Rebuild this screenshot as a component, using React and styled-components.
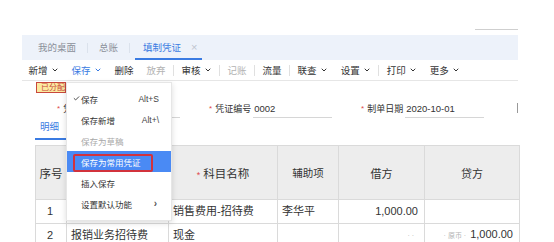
import React from "react";
import styled, { createGlobalStyle } from "styled-components";
import { ChevronDown, Check } from "lucide-react";

const GlobalStyle = createGlobalStyle`
  html, body {
    margin: 0;
    background: #fff;
    font-family: "Liberation Sans", "Noto Sans CJK SC", sans-serif;
    color: #333;
  }
`;

const Page = styled.div`
  width: 554px;
  height: 242px;
  overflow: hidden;
`;

const TopStrip = styled.div`
  height: 35px;
  display: flex;
  justify-content: flex-end;
  align-items: flex-end;
  padding-right: 36px;
`;

const TopLine = styled.div`
  width: 43px;
  height: 1px;
  margin-bottom: 5px;
  background: #cfcfcf;
`;

const Frame = styled.div`
  width: 496px;
  margin-left: 22px;
`;

const TabBar = styled.div`
  height: 25px;
  background: #edf2fa;
  display: flex;
  align-items: stretch;
  gap: 5px;
  padding-left: 10px;
  font-size: 9.5px;
`;

const Tab = styled.div`
  display: flex;
  align-items: center;
  gap: 10px;
  padding: 0 ${(p) => (p.$active ? "5px 0 8px" : "6px")};
  color: ${(p) => (p.$active ? "#3a7be2" : "#8a8f99")};
  border-bottom: 2px solid ${(p) => (p.$active ? "#3a7be2" : "transparent")};
  box-sizing: border-box;
`;

const TabSep = styled.div`
  width: 1px;
  height: 10px;
  align-self: center;
  background: #dbe2ec;
`;

const Close = styled.span`
  color: #bfc5cf;
  font-size: 11px;
`;

const Toolbar = styled.div`
  height: 20px;
  display: flex;
  align-items: center;
  border-bottom: 1px solid #e6e6e6;
  font-size: 9.5px;
`;

const ToolItem = styled.div`
  display: flex;
  align-items: center;
  padding: 0 6.5px;
  color: ${(p) => (p.$tone === "blue" ? "#3a7be2" : p.$tone === "muted" ? "#b3b3b3" : "#333")};
  svg {
    margin-left: 3px;
  }
`;

const ToolSep = styled.div`
  width: 1px;
  height: 11px;
  margin: 0 1px;
  background: #e0e0e0;
`;

const Body = styled.div`
  position: relative;
  padding-left: 13px;
`;

const Stamp = styled.div`
  margin-top: 1px;
  margin-left: 1px;
  width: 30px;
  height: 11px;
  box-sizing: border-box;
  border: 1px solid #c9483d;
  background: #fbeaa0;
  color: #c9483d;
  font-size: 8px;
  line-height: 9px;
  padding-left: 4px;
  overflow: hidden;
  white-space: nowrap;
`;

const FormRow = styled.div`
  display: flex;
  gap: 29px;
  margin-top: 4px;
  padding-left: 22px;
  height: 22px;
  align-items: center;
`;

const Field = styled.div`
  width: 123px;
  display: flex;
  align-items: center;
  font-size: 9px;
`;

const Req = styled.span`
  color: #e0484b;
  margin-right: 3px;
  font-size: ${(p) => p.$size || "8px"};
`;

const Label = styled.span`
  white-space: nowrap;
  margin-right: 2px;
`;

const Value = styled.span`
  flex: 1;
  border-bottom: 1px solid #d6d6d6;
  padding: 0 0 2px 1px;
  font-size: 9.5px;
  line-height: 12px;
  margin-top: 4px;
`;

const EdgeMark = styled.div`
  margin-left: auto;
  width: 1px;
  height: 10px;
  background: #999;
`;

const DetailTabs = styled.div`
  height: 21px;
  display: flex;
  align-items: flex-end;
`;

const DetailTab = styled.div`
  width: 31px;
  box-sizing: border-box;
  padding: 0 0 5px 5px;
  font-size: 9.5px;
  color: #3a7be2;
  border-bottom: 2px solid #3a7be2;
`;

const Table = styled.table`
  margin-top: 5px;
  border-collapse: collapse;
  table-layout: fixed;
  width: 484px;
  font-size: 11px;
`;

const Th = styled.th`
  height: 53px;
  padding: 0;
  background: #ededed;
  border: 1px solid #dadada;
  font-weight: normal;
  color: #333;
  font-size: ${(p) => p.$size || "11px"};
`;

const Td = styled.td`
  height: 24px;
  padding: 0 6px 2px 4px;
  box-sizing: border-box;
  border: 1px solid #dadada;
  text-align: ${(p) => p.$align || "left"};
  white-space: nowrap;
  overflow: hidden;
  color: #333;
  line-height: 14px;
`;

const Faint = styled.span`
  color: #b5b5b5;
  font-size: 7px;
  margin-right: 4px;
`;

const Menu = styled.div`
  position: absolute;
  left: 44px;
  top: 0;
  width: 106px;
  padding: 5px 0 6px;
  background: #fff;
  border: 1px solid #e6e6e6;
  box-shadow: 0 2px 6px rgba(0, 0, 0, 0.14);
  box-sizing: border-box;
  z-index: 2;
`;

const MenuItem = styled.div`
  position: relative;
  height: 21px;
  display: flex;
  align-items: center;
  padding: 0 12px 0 6px;
  font-size: 8.5px;
  background: ${(p) => (p.$active ? "#4a8af4" : "transparent")};
  color: ${(p) => (p.$active ? "#fff" : p.$muted ? "#a8a8a8" : "#333")};
`;

const CheckSlot = styled.span`
  width: 8px;
  display: flex;
  align-items: center;
`;

const Shortcut = styled.span`
  margin-left: auto;
  font-size: 8.5px;
  color: #444;
`;

const Arrow = styled.span`
  margin-left: auto;
  margin-right: 2px;
  font-size: 10px;
  font-weight: bold;
  color: #555;
`;

const Annot = styled.div`
  position: absolute;
  left: 6px;
  top: 3px;
  width: 80px;
  height: 18px;
  box-sizing: border-box;
  border: 2px solid #d2323c;
  border-radius: 2px;
`;

const tools = [
  { t: "新增", dd: true },
  { t: "保存", dd: true, tone: "blue" },
  { t: "删除" },
  { t: "放弃", tone: "muted" },
  "sep",
  { t: "审核", dd: true },
  "sep",
  { t: "记账", tone: "muted" },
  "sep",
  { t: "流量" },
  "sep",
  { t: "联查", dd: true },
  { t: "设置", dd: true },
  "sep",
  { t: "打印", dd: true },
  { t: "更多", dd: true },
];

export default function App() {
  return (
    <Page>
      <GlobalStyle />
      <TopStrip>
        <TopLine />
      </TopStrip>
      <Frame>
        <TabBar>
          <Tab>我的桌面</Tab>
          <TabSep />
          <Tab>总账</Tab>
          <TabSep />
          <Tab $active>
            填制凭证<Close>×</Close>
          </Tab>
        </TabBar>
        <Toolbar>
          {tools.map((item, i) =>
            item === "sep" ? (
              <ToolSep key={i} />
            ) : (
              <ToolItem key={i} $tone={item.tone}>
                {item.t}
                {item.dd && <ChevronDown size={8} strokeWidth={3} />}
              </ToolItem>
            )
          )}
        </Toolbar>
        <Body>
          <Stamp>已分配</Stamp>
          <FormRow>
            <Field>
              <Req>*</Req>
              <Label>凭证字</Label>
              <Value>记</Value>
            </Field>
            <Field>
              <Req>*</Req>
              <Label>凭证编号</Label>
              <Value>0002</Value>
            </Field>
            <Field>
              <Req>*</Req>
              <Label>制单日期</Label>
              <Value>2020-10-01</Value>
            </Field>
            <EdgeMark />
          </FormRow>
          <DetailTabs>
            <DetailTab>明细</DetailTab>
          </DetailTabs>
          <Table>
            <colgroup>
              <col style={{ width: 31 }} />
              <col style={{ width: 102 }} />
              <col style={{ width: 109 }} />
              <col style={{ width: 61 }} />
              <col style={{ width: 86 }} />
              <col style={{ width: 95 }} />
            </colgroup>
            <thead>
              <tr>
                <Th $size="11.5px">序号</Th>
                <Th>
                  <Req $size="9px">*</Req>摘要
                </Th>
                <Th $size="11.5px">
                  <Req $size="9px">*</Req>科目名称
                </Th>
                <Th $size="10.5px">辅助项</Th>
                <Th>借方</Th>
                <Th>贷方</Th>
              </tr>
            </thead>
            <tbody>
              <tr>
                <Td $align="center">1</Td>
                <Td />
                <Td>销售费用-招待费</Td>
                <Td>李华平</Td>
                <Td $align="right">1,000.00</Td>
                <Td />
              </tr>
              <tr>
                <Td $align="center">2</Td>
                <Td>报销业务招待费</Td>
                <Td>现金</Td>
                <Td />
                <Td $align="right">
                  <Faint>· ·</Faint>
                </Td>
                <Td $align="right">
                  <Faint>· 原币 ·</Faint>1,000.00
                </Td>
              </tr>
            </tbody>
          </Table>
          <Menu>
            <MenuItem>
              <CheckSlot>
                <Check size={7} strokeWidth={3} />
              </CheckSlot>
              保存<Shortcut>Alt+S</Shortcut>
            </MenuItem>
            <MenuItem>
              <CheckSlot />
              保存新增<Shortcut>Alt+\</Shortcut>
            </MenuItem>
            <MenuItem $muted>
              <CheckSlot />
              保存为草稿
            </MenuItem>
            <MenuItem $active>
              <CheckSlot />
              保存为常用凭证
              <Annot />
            </MenuItem>
            <MenuItem>
              <CheckSlot />
              插入保存
            </MenuItem>
            <MenuItem>
              <CheckSlot />
              设置默认功能<Arrow>›</Arrow>
            </MenuItem>
          </Menu>
        </Body>
      </Frame>
    </Page>
  );
}
